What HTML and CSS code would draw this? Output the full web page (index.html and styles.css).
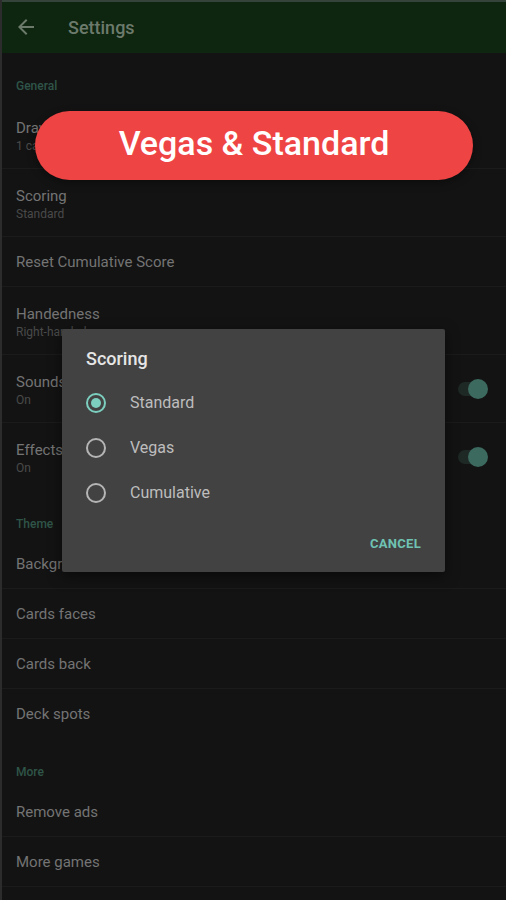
FILE: index.html
```html
<!DOCTYPE html>
<html>
<head>
<meta charset="utf-8">
<link rel="stylesheet" href="styles.css">
</head>
<body>
<div class="screen">
  <header class="appbar">
    <svg class="back" width="24" height="24" viewBox="0 0 24 24"><path d="M20 11H7.83l5.59-5.59L12 4l-8 8 8 8 1.41-1.41L7.83 13H20v-2z" fill="#6b7a6b"/></svg>
    <span class="appbar-title">Settings</span>
  </header>
  <main class="list">
    <div class="section">General</div>
    <div class="row two"><div class="t">Draw</div><div class="s">1 card</div></div>
    <div class="row two"><div class="t">Scoring</div><div class="s">Standard</div></div>
    <div class="row one"><div class="t">Reset Cumulative Score</div></div>
    <div class="row two"><div class="t">Handedness</div><div class="s">Right-handed</div></div>
    <div class="row two sw"><div class="txt"><div class="t">Sounds</div><div class="s">On</div></div><span class="toggle"><span class="thumb"></span></span></div>
    <div class="row two sw nodiv"><div class="txt"><div class="t">Effects</div><div class="s">On</div></div><span class="toggle"><span class="thumb"></span></span></div>
    <div class="section">Theme</div>
    <div class="row one"><div class="t">Background</div></div>
    <div class="row one"><div class="t">Cards faces</div></div>
    <div class="row one"><div class="t">Cards back</div></div>
    <div class="row one nodiv"><div class="t">Deck spots</div></div>
    <div class="section">More</div>
    <div class="row one"><div class="t">Remove ads</div></div>
    <div class="row one"><div class="t">More games</div></div>
  </main>

  <div class="dialog">
    <div class="dialog-title">Scoring</div>
    <div class="opts">
      <div class="opt"><span class="radio on"></span><span class="lbl">Standard</span></div>
      <div class="opt"><span class="radio"></span><span class="lbl">Vegas</span></div>
      <div class="opt"><span class="radio"></span><span class="lbl">Cumulative</span></div>
    </div>
    <div class="actions"><span class="cancel">CANCEL</span></div>
  </div>

  <div class="banner">Vegas &amp; Standard</div>
</div>
</body>
</html>
```
FILE: styles.css
```css
html, body {
  margin: 0;
  padding: 0;
  background: #121212;
}
body {
  width: 506px;
  height: 900px;
  overflow: hidden;
  font-family: Roboto, "Noto Sans", sans-serif;
}
.screen {
  position: relative;
  width: 506px;
  height: 900px;
  background: #131313;
  border-left: 2px solid #2c2c2c;
  box-sizing: border-box;
  overflow: hidden;
}
.appbar {
  height: 53px;
  box-sizing: border-box;
  border-top: 2px solid #34443a;
  background: #0e250f;
  display: flex;
  align-items: center;
  padding-left: 12px;
}
.back {
  display: block;
  margin-top: -1px;
}
.appbar-title {
  margin-left: 30px;
  font-size: 18px;
  font-weight: 500;
  color: #6c7a6c;
  margin-top: -1px;
}
.list {
  display: flex;
  flex-direction: column;
}
.section {
  height: 48px;
  box-sizing: border-box;
  padding: 25px 0 0 14px;
  font-size: 12px;
  line-height: 16px;
  font-weight: 500;
  color: #2f5548;
}
.row {
  box-sizing: border-box;
  padding-left: 14px;
  border-bottom: 1px solid #1b1b1b;
}
.row.nodiv { border-bottom-color: transparent; }
.row.two {
  height: 68px;
  padding-top: 18px;
}
.row.one {
  height: 50px;
  display: flex;
  align-items: center;
}
.row.sw {
  display: flex;
  align-items: flex-start;
  justify-content: space-between;
  padding-right: 24px;
}
.t {
  font-size: 15px;
  line-height: 18px;
  color: #747474;
}
.s {
  font-size: 12px;
  line-height: 18px;
  color: #4a4a4a;
}
.toggle {
  position: relative;
  width: 24px;
  height: 14px;
  border-radius: 7px;
  background: #1e2926;
  margin-top: 9px;
}
.thumb {
  position: absolute;
  right: -6px;
  top: -3px;
  width: 20px;
  height: 20px;
  border-radius: 50%;
  background: #3c6a5f;
}
.dialog {
  position: absolute;
  left: 60px;
  top: 329px;
  width: 383px;
  height: 243px;
  box-sizing: border-box;
  background: #424242;
  border-radius: 2px;
  box-shadow: 0 4px 14px rgba(0,0,0,0.5);
  display: flex;
  flex-direction: column;
  padding: 19px 24px 0 24px;
}
.dialog-title {
  font-size: 18px;
  line-height: 22px;
  font-weight: 500;
  color: #e6e6e6;
}
.opts {
  display: flex;
  flex-direction: column;
  margin-top: 10px;
}
.opt {
  height: 45px;
  display: flex;
  align-items: center;
}
.radio {
  width: 20px;
  height: 20px;
  box-sizing: border-box;
  border: 2px solid #b5b5b5;
  border-radius: 50%;
  position: relative;
}
.radio.on {
  border-color: #7ccfbf;
}
.radio.on::after {
  content: "";
  position: absolute;
  left: 3px;
  top: 3px;
  width: 10px;
  height: 10px;
  border-radius: 50%;
  background: #7ccfbf;
}
.lbl {
  margin-left: 24px;
  font-size: 16px;
  color: #bdbdbd;
}
.actions {
  display: flex;
  justify-content: flex-end;
  margin-top: 21px;
}
.cancel {
  font-size: 13px;
  font-weight: 700;
  color: #6fc2b2;
  letter-spacing: 0.3px;
}
.banner {
  position: absolute;
  left: 33px;
  top: 111px;
  width: 438px;
  height: 69px;
  box-sizing: border-box;
  padding-bottom: 5px;
  border-radius: 35px;
  background: #ef4444;
  color: #ffffff;
  font-size: 34px;
  font-weight: 500;
  display: flex;
  align-items: center;
  justify-content: center;
  box-shadow: 0 3px 8px rgba(0,0,0,0.35);
}
```
